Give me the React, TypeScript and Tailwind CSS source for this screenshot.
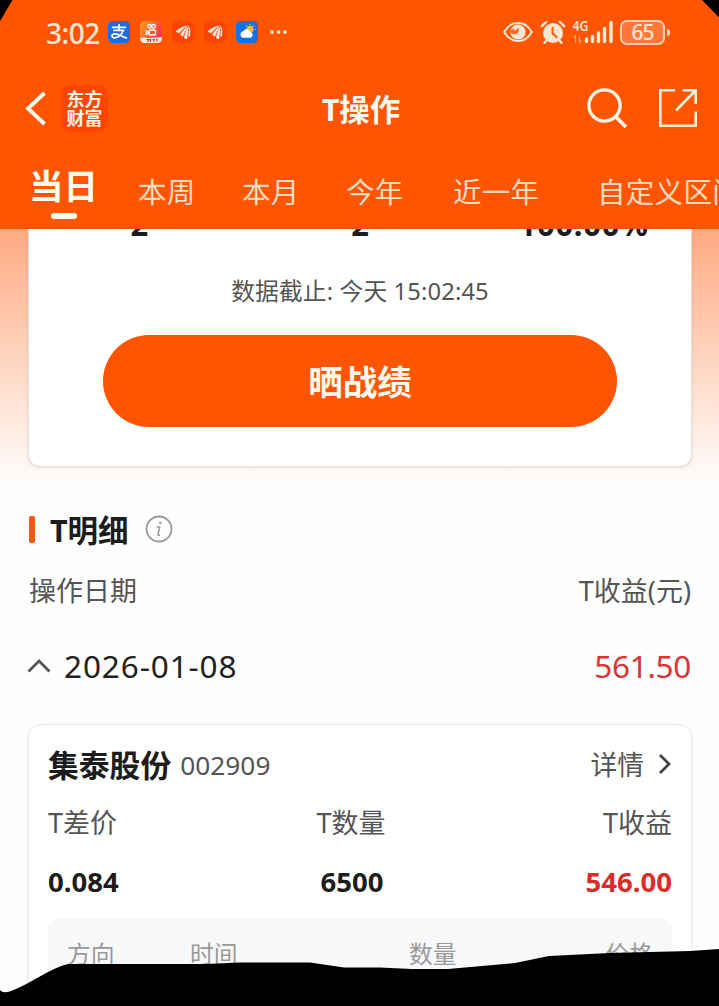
import React from "react";

function StatusBar() {
  return (
    <div className="flex h-[64px] items-center pl-[46px] pr-[49px] text-[#ffe6d2]">
      <span className="w-[62px] whitespace-nowrap pt-[2px] text-[28px] font-medium leading-[32px] tracking-[-0.5px]">3:02</span>
      <div className="flex items-center gap-[10px]">
        <svg width="22" height="22" viewBox="0 0 22 22">
          <rect width="22" height="22" rx="5" fill="#1a6dea" />
          <g fill="none" stroke="#fff" strokeWidth="1.7" strokeLinecap="round">
            <path d="M4.5 6.3h13M11 3.6v5.6M6 9.4h9.6" />
            <path d="M15 9.6c-1.2 4.4-5 7.4-8.4 7.3-3.600-.1-3.400-4 .2-4 3.400 0 7.200 2.600 11.600 4" />
          </g>
        </svg>
        <svg width="22" height="22" viewBox="0 0 22 22">
          <defs>
            <linearGradient id="video" x1="0" y1="0" x2="1" y2="0.6">
              <stop offset="0" stopColor="#ffa21f" />
              <stop offset="1" stopColor="#fb3047" />
            </linearGradient>
          </defs>
          <rect width="22" height="22" rx="5" fill="url(#video)" />
          <g fill="none" stroke="#fff" strokeWidth="1.3">
            <circle cx="9.500" cy="5.300" r="1.800" />
            <circle cx="13.500" cy="5.300" r="1.800" />
            <rect x="9" y="9" width="6.500" height="5" rx="1.200" />
            <path d="M8.800 11.500 6.300 10v3.400z" />
          </g>
          <path d="M0 17c3-1 6-.5 9 0l13-1v1c0 3-2 5-5 5H5c-3 0-5-2-5-5z" fill="#ffe7dc" />
          <path d="M6.500 18.500h2.500l-1.500 2.500M10.500 18v3M12.500 18.500h2.500M13.800 18v3M17 17.500v3" stroke="#e8323c" strokeWidth="1.200" fill="none" />
        </svg>
        <WingIcon />
        <WingIcon />
        <svg width="22" height="22" viewBox="0 0 22 22">
          <rect width="22" height="22" rx="5" fill="#0f73e6" />
          <circle cx="14" cy="8.300" r="3.600" fill="#f6b93c" />
          <path d="M14 2.900v1.200M18.200 4.500l-.9.900M19.800 8.500h-1.200M10.200 4.500l.8.8" stroke="#f6b93c" strokeWidth="1.200" />
          <path d="M7.500 16.800a3.300 3.300 0 0 1-.4-6.500 4 4 0 0 1 7.200.7 3 3 0 0 1 .2 5.800z" fill="#fff" />
        </svg>
        <svg width="20" height="22" viewBox="0 0 20 22" fill="#ffe0cc">
          <circle cx="4" cy="11" r="1.900" />
          <circle cx="10.500" cy="11" r="1.900" />
          <circle cx="17" cy="11" r="1.900" />
        </svg>
      </div>
      <div className="ml-auto flex items-center">
        <svg width="30" height="24" viewBox="0 0 30 24">
          <path d="M1.200 12C5 5.500 9.500 3 15 3s10 2.500 13.800 9C25 18.500 20.500 21 15 21S5 18.500 1.200 12z" fill="none" stroke="#ffe6d2" strokeWidth="2" />
          <circle cx="15" cy="12" r="7.600" fill="#ffe6d2" />
          <path d="M7 11c1 3.500 6 4.500 8 1.500 1.300-2 .8-4.200-.6-5.200-.2 2.300-1.400 3.300-3.200 3.200.2-.8 0-1.500-.4-2.200z" fill="#ff6a20" />
        </svg>
        <svg width="26" height="26" viewBox="0 0 26 26" className="ml-[7px]">
          <circle cx="13" cy="14" r="10" fill="#ffe6d2" />
          <path d="M1.800 7.200 6.200 3M24.200 7.200 19.800 3M6.500 21.500l-2 2.300M19.500 21.500l2 2.300" stroke="#ffe6d2" strokeWidth="2.400" strokeLinecap="round" />
          <path d="M12.500 8.500v6l4 3.500" fill="none" stroke="#ff5a05" strokeWidth="2" strokeLinecap="round" />
        </svg>
        <div className="ml-[6px] flex h-[26px] w-[42px]">
          <svg width="42" height="26" viewBox="0 0 42 26">
            <text x="0.500" y="12" fontSize="13.500" fontWeight="600" textLength="16" lengthAdjust="spacingAndGlyphs" fill="#ffe6d2">4G</text>
            <path d="M1.500 18.500 3.500 16.500v7M7.500 16.500v7l2-2" fill="none" stroke="#ffa06a" strokeWidth="1.200" />
            <path d="M14.500 20v2.500M20.500 17.500v5M26.500 14v8.500M32.500 9.500v13M39 3.500v19" stroke="#ffe6d2" strokeWidth="3.400" strokeLinecap="round" />
          </svg>
        </div>
        <div className="ml-[6px] flex h-[25px] w-[45px] items-center justify-center rounded-[7px] border-2 border-[#ffcfae] bg-[#ff7838] text-[21px] font-medium leading-none tracking-[-1px] text-[#ffe6d2]">
          65
        </div>
        <div className="ml-[2px] h-[7px] w-[3px] rounded-r bg-[#ffd9c0]" />
      </div>
    </div>
  );
}

function WingIcon() {
  return (
    <svg width="22" height="22" viewBox="0 0 22 22">
      <rect width="22" height="22" rx="5" fill="#ff4305" />
      <g fill="#ffeee0">
        <path d="M3.800 10.300C7 7 11.500 4.600 17 4.200 13 6 9.800 8.600 7.400 12c-1.600-.1-2.800-.7-3.600-1.700z" />
        <path d="M8.200 13.500C10.300 10 13.300 6.800 17 4.700c-2.600 3-4.600 6.600-6 10.700-1.300-.3-2.200-.9-2.800-1.900z" />
        <path d="M12 17C12.800 12.500 14.500 8.300 17 5.200c-1 4-1.600 8-1.800 12.700-1.300 0-2.400-.3-3.200-.9z" />
        <path d="M16.300 16C16.300 12 16.800 8.500 17.600 5.200c.8 3.300.9 6.500.2 10-.3.500-.9.800-1.500.8z" />
      </g>
    </svg>
  );
}

function TitleBar() {
  return (
    <div className="grid h-[88px] grid-cols-3 items-center pl-[24px] pr-[21px]">
      <div className="flex items-center">
        <svg width="24" height="36" viewBox="0 0 24 36" fill="none" stroke="#fff8f0" strokeWidth="3.800">
          <path d="M20.500 3 4 18.500 20.500 34" />
        </svg>
        <div className="ml-[13px] w-[47px] rounded-[10px] bg-[#ff4500] py-[4px] text-center font-['Noto_Sans_CJK_SC',sans-serif] text-[18px] font-bold leading-[19.500px] text-[#fff3e6]">
          东方
          <br />
          财富
        </div>
      </div>
      <h1 className="pt-[2px] text-center text-[30.500px] font-bold leading-[40px] text-[#fff8ee]">T操作</h1>
      <div className="flex items-center justify-end gap-[30px]">
        <svg width="42" height="42" viewBox="0 0 42 42" fill="none" stroke="#fff3e2" strokeWidth="3.400">
          <circle cx="18.500" cy="18.500" r="15.600" />
          <path d="M29.500 29.500 40 40" strokeWidth="3.800" />
        </svg>
        <svg width="40" height="40" viewBox="0 0 40 40" fill="none" stroke="#fff0dc" strokeWidth="2.600">
          <path d="M17 2.300H2.300v35.400h35.400V23.500M24.500 2.300h13.200V16M37 3 18 22.500" />
        </svg>
      </div>
    </div>
  );
}

const tabs = [
  { label: "本周", box: "w-[104px]" },
  { label: "本月", box: "w-[104px]" },
  { label: "今年", box: "w-[107px]" },
  { label: "近一年", box: "w-[144px]" },
  { label: "自定义区间", box: "w-[160px]" },
];

function Tabs() {
  return (
    <div className="flex h-[77px] overflow-hidden pl-[29px]">
      <div className="flex w-[109px] shrink-0 flex-col">
        <span className="mt-[12px] text-[34.500px] font-bold leading-[44px] text-[#fffaf2]">当日</span>
        <span className="ml-[22px] mt-[5px] h-[6px] w-[26px] rounded-full bg-[#fffaf2]" />
      </div>
      {tabs.map((t) => (
        <span key={t.label} className={`${t.box} mt-[20px] shrink-0 whitespace-nowrap text-[28.500px] leading-[40px] tracking-[0.3px] text-[#ffdcc0]`}>
          {t.label}
        </span>
      ))}
    </div>
  );
}

function SummaryCard() {
  return (
    <section className="ml-[28px] mr-[27px] h-[238px] rounded-b-[12px] border border-t-0 border-[#e6ddd9] bg-white shadow-[0_1px_3px_rgba(0,0,0,0.1)]">
      <div className="h-[38px] overflow-hidden">
        <div className="-mt-[24px] grid grid-cols-3 text-center text-[31px] font-bold leading-[38px] text-[#1c1c1c]">
          <span>2</span>
          <span>2</span>
          <span className="whitespace-nowrap pl-[6px] tracking-[0.7px]">100.00%</span>
        </div>
      </div>
      <p className="mt-[6px] text-center text-[23.800px] leading-[36px] tracking-[0.1px] text-[#555]">数据截止: 今天 15:02:45</p>
      <button className="mx-auto mt-[26px] block h-[92px] w-[514px] rounded-full bg-[#ff5500] pt-[2px] text-[34.500px] font-bold leading-[90px] text-[#fffaf4]">晒战绩</button>
    </section>
  );
}

function DetailHeader() {
  return (
    <>
      <div className="mt-[38px] flex h-[48px] items-center pl-[29px]">
        <span className="h-[27px] w-[6px] rounded-[2px] bg-[#f55a0c]" />
        <h2 className="ml-[15px] w-[81px] whitespace-nowrap pt-[1px] text-[30.500px] font-bold leading-[40px] text-[#1c1c1c]">T明细</h2>
        <svg className="ml-[14px]" width="28" height="28" viewBox="0 0 28 28">
          <circle cx="14" cy="14" r="12.500" fill="none" stroke="#999" strokeWidth="1.800" />
          <circle cx="15.300" cy="8" r="1.300" fill="#999" />
          <path d="M11.500 12h3.200L13 19.500c-.2 1 .8 1 2 .3" fill="none" stroke="#999" strokeWidth="1.500" />
        </svg>
      </div>
      <div className="mt-[18px] flex h-[40px] items-center justify-between pl-[29px] pr-[28px] text-[27px] leading-[40px] text-[#555]">
        <span>操作日期</span>
        <span>T收益(元)</span>
      </div>
      <div className="mt-[31px] flex h-[48px] items-center pl-[27px] pr-[28px] text-[31.500px] leading-[48px]">
        <svg width="24" height="16" viewBox="0 0 24 16" fill="none" stroke="#555" strokeWidth="2.800">
          <path d="M1.500 13.500 12 3l10.500 10.500" />
        </svg>
        <span className="ml-[13px] tracking-[0.900px] text-[#222]">2026-01-08</span>
        <span className="ml-auto tracking-[-0.300px] text-[#d33]">561.50</span>
      </div>
    </>
  );
}

function StockCard() {
  return (
    <section className="ml-[28px] mr-[27px] mt-[34px] h-[300px] rounded-[14px] border border-[#ededed] bg-white px-[19px] shadow-[0_1px_3px_rgba(0,0,0,0.12)]">
      <div className="mt-[19px] flex h-[42px] items-center text-[26.300px] leading-[42px] text-[#555]">
        <span className="text-[30.800px] font-bold text-[#1c1c1c]">集泰股份</span>
        <span className="ml-[9px]">002909</span>
        <span className="ml-auto text-[26.800px]">详情</span>
        <svg className="ml-[14px] -mt-[3px]" width="14" height="22" viewBox="0 0 14 22" fill="none" stroke="#444" strokeWidth="2.800">
          <path d="M2 2l9 9-9 9" />
        </svg>
      </div>
      <div className="mt-[16px] grid h-[42px] grid-cols-3 text-[27px] leading-[42px] text-[#555]">
        <span>T差价</span>
        <span className="pr-[18px] text-center">T数量</span>
        <span className="text-right">T收益</span>
      </div>
      <div className="mt-[17px] grid h-[42px] grid-cols-3 text-[27.500px] font-bold leading-[42px] text-[#1c1c1c]">
        <span>0.084</span>
        <span className="pr-[16px] text-center">6500</span>
        <span className="text-right text-[#dc2b2b]">546.00</span>
      </div>
      <div className="mt-[15px] flex h-[90px] rounded-[12px] bg-[#f7f8fa] px-[19px] pt-[17px] text-[23.800px] leading-[38px] text-[#999]">
        <span className="w-[123px]">方向</span>
        <span className="w-[219px]">时间</span>
        <span>数量</span>
        <span className="ml-auto">价格</span>
      </div>
    </section>
  );
}

export default function App() {
  return (
    <main className="relative h-[1006px] w-[719px] overflow-hidden bg-[#fefefe] font-['Noto_Sans','Noto_Sans_CJK_SC',sans-serif]">
      <header className="h-[229px] bg-[#ff5500]">
        <StatusBar />
        <TitleBar />
        <Tabs />
      </header>
      <div className="h-[258px] bg-linear-to-b from-[#ffa981] to-[#fefefe]">
        <SummaryCard />
      </div>
      <div className="-mt-[20px]">
        <DetailHeader />
        <StockCard />
      </div>
      <svg className="pointer-events-none absolute inset-0" width="719" height="1006" viewBox="0 0 719 1006">
        <path d="M0 0H12.500L0 21zM702 0H719V17.500z" />
        <path d="M0 990Q3 994 11 991C30 984 50 968 68 964H205L240 962.500H310L344 967.500H380L412 969H448L515 963L549 956L610 953L690 951L719 949V1006H0z" />
      </svg>
    </main>
  );
}
